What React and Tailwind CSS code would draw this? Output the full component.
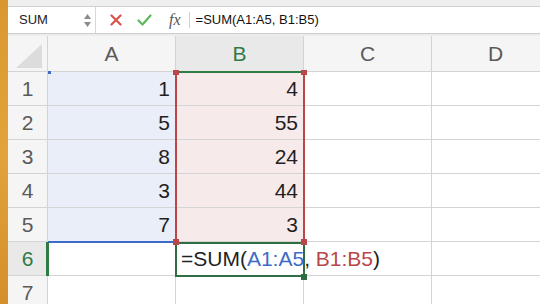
import React from "react";

const F = { fontFamily: '"Liberation Sans", Arial, sans-serif' };

function HeaderCell({ children, active, w }) {
  return (
    <div
      className={`h-[36px] ${w} shrink-0 flex items-center justify-center border-r border-b border-[#d4d4d4] text-[21px] ${
        active ? "bg-[#e9e9e9] text-[#2f7a45]" : "bg-[#f5f5f5] text-[#5a5a5a]"
      }`}
    >
      {children}
    </div>
  );
}

function Cell({ children, bg = "bg-white", w = "w-[128px]" }) {
  return (
    <div
      className={`h-[34px] ${w} shrink-0 border-r border-b border-[#d4d4d4] ${bg} flex items-center justify-end pr-[5px] text-[21px] text-[#1f1f1f]`}
    >
      {children}
    </div>
  );
}

export default function App() {
  const a = [1, 5, 8, 3, 7];
  const b = [4, 55, 24, 44, 3];
  return (
    <div className="w-[540px] h-[304px] overflow-hidden flex bg-white" style={F}>
      <div className="w-[8px] shrink-0 bg-gradient-to-b from-[#d9982f] via-[#e2a43a] to-[#d48f2a]" />
      <div className="flex-1 flex flex-col min-w-0">
        <div className="h-[7px] shrink-0 bg-[#efefef] border-b border-[#d0d0d0]" />
        <div className="h-[27px] shrink-0 flex items-center bg-white border-b border-[#cdcdcd]">
          <div className="w-[88px] h-full flex items-center justify-between pl-[11px] pr-[4px] border-r border-[#d8d8d8] text-[13px] text-[#222]">
            <span>SUM</span>
            <div className="flex flex-col items-center gap-[3px]">
              <svg width="7" height="5" viewBox="0 0 7 5"><path d="M3.5 0L7 5H0z" fill="#8a8a8a" /></svg>
              <svg width="7" height="5" viewBox="0 0 7 5"><path d="M0 0h7L3.5 5z" fill="#8a8a8a" /></svg>
            </div>
          </div>
          <div className="w-[14px]" />
          <svg width="12" height="12" viewBox="0 0 12 12">
            <path d="M1.5 1.5l9 9M10.5 1.5l-9 9" stroke="#d9534f" strokeWidth="2.2" strokeLinecap="round" />
          </svg>
          <div className="w-[15px]" />
          <svg width="15" height="12" viewBox="0 0 15 12">
            <path d="M1.5 6.5l4 4 8-9" stroke="#5cb85c" strokeWidth="2.2" fill="none" strokeLinecap="round" strokeLinejoin="round" />
          </svg>
          <div className="w-[17px]" />
          <span className="text-[16px] italic text-[#555]" style={{ fontFamily: '"Liberation Serif", serif' }}>
            fx
          </span>
          <div className="w-[8px]" />
          <div className="w-px h-[16px] bg-[#d0d0d0]" />
          <span className="ml-[6px] text-[13px] text-[#111] whitespace-nowrap">=SUM(A1:A5, B1:B5)</span>
        </div>
        <div className="h-[2px] shrink-0 bg-[#ededed]" />
        <div className="relative flex-1 min-h-0 overflow-hidden">
          <div className="flex">
            <div className="w-[40px] h-[36px] shrink-0 bg-[#f5f5f5] border-r border-b border-[#d4d4d4] relative overflow-hidden">
              <svg width="40" height="36" viewBox="0 0 40 36" className="absolute inset-0">
                <path d="M34 8V32H8z" fill="#dcdcdc" />
              </svg>
            </div>
            <HeaderCell w="w-[128px]">A</HeaderCell>
            <HeaderCell w="w-[128px]" active>B</HeaderCell>
            <HeaderCell w="w-[128px]">C</HeaderCell>
            <HeaderCell w="w-[128px]">D</HeaderCell>
          </div>
          {[0, 1, 2, 3, 4, 5, 6].map((i) => (
            <div className="flex" key={i}>
              <div
                className={`w-[40px] h-[34px] shrink-0 border-r border-b border-[#d4d4d4] flex items-center justify-center text-[21px] ${
                  i === 5 ? "bg-[#e9e9e9] text-[#2f7a45]" : "bg-[#f5f5f5] text-[#5a5a5a]"
                }`}
              >
                {i + 1}
              </div>
              <Cell bg={i < 5 ? "bg-[#e9eef8]" : "bg-white"}>{i < 5 ? a[i] : ""}</Cell>
              <Cell bg={i < 5 ? "bg-[#f7eaea]" : "bg-white"}>{i < 5 ? b[i] : ""}</Cell>
              <Cell />
              <Cell />
            </div>
          ))}

          {/* overlays */}
          <div className="absolute left-[168px] top-[35px] w-[128px] h-[2px] bg-[#2f7a45]" />
          <div className="absolute left-[167px] top-[36px] w-[2px] h-[171px] bg-[#b9474a]" />
          <div className="absolute left-[295px] top-[36px] w-[2px] h-[171px] bg-[#b9474a]" />
          <div className="absolute left-[40px] top-[205px] w-[128px] h-[2px] bg-[#3d6cc8]" />
          <div className="absolute left-[38px] top-[206px] w-[3px] h-[34px] bg-[#2f7a45]" />
          <div className="absolute left-[167px] top-[206px] w-[130px] h-[35px] border-2 border-[#2f6e42]" />
          <div className="absolute left-[40px] top-[35px] w-[3px] h-[3px] bg-[#3d6cc8]" />
          <div className="absolute left-[165px] top-[34px] w-[6px] h-[5px] bg-[#b9474a]" />
          <div className="absolute left-[293px] top-[34px] w-[6px] h-[5px] bg-[#b9474a]" />
          <div className="absolute left-[165px] top-[203px] w-[6px] h-[6px] bg-[#b9474a]" />
          <div className="absolute left-[293px] top-[203px] w-[6px] h-[6px] bg-[#b9474a]" />
          <div className="absolute left-[293px] top-[238px] w-[6px] h-[6px] bg-[#2f6e42]" />
          <div className="absolute left-[173px] top-[206px] h-[34px] flex items-center whitespace-nowrap text-[21px] text-[#1f1f1f]">
            =SUM(<span className="text-[#3d6cc8]">A1:A5</span>,&nbsp;<span className="text-[#b9474a]">B1:B5</span>)
          </div>
        </div>
      </div>
    </div>
  );
}
